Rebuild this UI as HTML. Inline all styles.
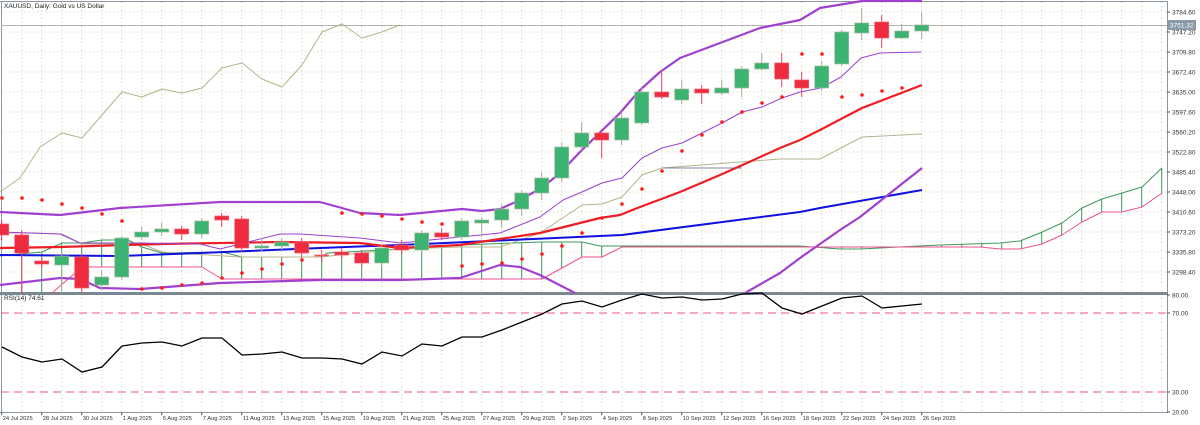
<!DOCTYPE html>
<html><head><meta charset="utf-8"><style>
html,body{margin:0;padding:0;background:#fff;width:1200px;height:425px;overflow:hidden}
svg{display:block;font-family:"Liberation Sans",sans-serif}
</style></head><body>
<svg id="s" width="1200" height="425" viewBox="0 0 1200 425" xmlns="http://www.w3.org/2000/svg">
<rect width="1200" height="425" fill="#fff"/>
<g id="grid"></g>
<g id="main" fill="none"></g>
<g id="cand"></g>
<g id="sar" fill="#ff1a1a"></g>
<g id="ax" font-size="6.5" fill="#333"></g>
<text x="4" y="8" font-size="6.5" fill="#222">XAUUSD, Daily:  Gold vs US Dollar</text>
<text x="4" y="300" font-size="6.5" fill="#222">RSI(14) 74.61</text>
</svg>
<script>
const NS="http://www.w3.org/2000/svg";
function el(p,t,a,txt){const e=document.createElementNS(NS,t);for(const k in a)e.setAttribute(k,a[k]);if(txt!==undefined)e.textContent=txt;document.getElementById(p).appendChild(e);return e;}
function pl(pts,c,w,extra){const a={points:pts.map(p=>p.join(',')).join(' '),stroke:c,'stroke-width':w,fill:'none','stroke-linejoin':'round'};Object.assign(a,extra||{});el('main','polyline',a);}
for(let x=1.7;x<1167;x+=20){el('grid','line',{x1:x,y1:2,x2:x,y2:412,stroke:'#c8c8b4','stroke-width':1,'stroke-dasharray':'1,3'});}
const prices=[[12,'3784.60'],[32,'3747.20'],[52,'3709.80'],[72,'3672.40'],[92,'3635.00'],[112,'3597.60'],[132,'3560.20'],[152,'3522.80'],[172,'3485.40'],[192,'3448.00'],[212,'3410.60'],[232,'3373.20'],[252,'3335.80'],[272,'3298.40']];
prices.forEach(p=>{el('grid','line',{x1:1,y1:p[0],x2:1167,y2:p[0],stroke:'#d6d6a8','stroke-width':1,'stroke-dasharray':'1,3'});el('ax','text',{x:1172,y:p[0]+2.5},p[1]);el('ax','line',{x1:1167,y1:p[0],x2:1170,y2:p[0],stroke:'#555'});});
[[295,'80.00'],[313,'70.00'],[392,'30.00'],[412,'20.00']].forEach(p=>{el('ax','text',{x:1172,y:p[0]+2.5},p[1]);el('ax','line',{x1:1167,y1:p[0],x2:1170,y2:p[0],stroke:'#555'});});
el('grid','line',{x1:0,y1:1.5,x2:1168,y2:1.5,stroke:'#8c98a4','stroke-width':1});
el('grid','line',{x1:1.5,y1:1,x2:1.5,y2:412,stroke:'#8c98a4','stroke-width':1});
el('grid','line',{x1:1167.5,y1:1,x2:1167.5,y2:413,stroke:'#8c98a4','stroke-width':1});
el('grid','line',{x1:0,y1:293.5,x2:1168,y2:293.5,stroke:'#7a8894','stroke-width':3});
el('grid','line',{x1:0,y1:412.5,x2:1168,y2:412.5,stroke:'#8c98a4','stroke-width':1});
el('grid','line',{x1:1,y1:25.5,x2:1167,y2:25.5,stroke:'#b4b4b4','stroke-width':1});
el('grid','line',{x1:1,y1:313,x2:1167,y2:313,stroke:'#f0508c','stroke-width':1,'stroke-dasharray':'8,5'});
el('grid','line',{x1:1,y1:392,x2:1167,y2:392,stroke:'#f0508c','stroke-width':1,'stroke-dasharray':'8,5'});
el('ax','rect',{x:1168,y:20,width:28,height:10,fill:'#8a9aa8'});
el('ax','text',{x:1170,y:27.5,fill:'#fff'},'3751.32');
const d=['24 Jul 2025','28 Jul 2025','30 Jul 2025','1 Aug 2025','5 Aug 2025','7 Aug 2025','11 Aug 2025','13 Aug 2025','15 Aug 2025','19 Aug 2025','21 Aug 2025','25 Aug 2025','27 Aug 2025','29 Aug 2025','2 Sep 2025','4 Sep 2025','8 Sep 2025','10 Sep 2025','12 Sep 2025','16 Sep 2025','18 Sep 2025','22 Sep 2025','24 Sep 2025','26 Sep 2025'];
d.forEach((t,i)=>{const x=1.7+40*i;el('ax','line',{x1:x,y1:412,x2:x,y2:415,stroke:'#555'});el('ax','text',{x:x+1,y:420,'font-size':'5.8'},t);});
const gA=[[0,256],[42,252],[62,243],[82,243],[102,240],[128,240],[142,247],[162,253],[222,252],[242,257],[320,257],[328,253],[400,249],[460,245],[540,242],[582,242],[600,246],[660,246],[800,246],[840,249],[860,249],[940,245],[1000,243],[1020,241],[1040,233],[1062,223],[1082,208],[1102,199],[1122,193],[1142,187],[1162,168]];
const pB=[[52,293],[82,267],[202,267],[222,279],[400,279],[542,279],[582,257],[602,257],[622,247],[980,247],[1000,249],[1020,249],[1042,244],[1062,235],[1082,222],[1102,212],[1122,212],[1142,207],[1162,193]];
function interp(arr,x){for(let i=0;i<arr.length-1;i++){if(x>=arr[i][0]&&x<=arr[i+1][0]){const t=(x-arr[i][0])/(arr[i+1][0]-arr[i][0]);return arr[i][1]+t*(arr[i+1][1]-arr[i][1]);}}return null;}
for(let x=21.7;x<1165;x+=20){const a=interp(gA,x);let b=interp(pB,x);if(b===null&&x<52)b=293;if(a!==null&&b!==null&&Math.abs(a-b)>1)el('main','line',{x1:x,y1:a,x2:x,y2:b,stroke:'#3c9a5a','stroke-width':1});}
pl(gA,'#3c9a5a',1);pl(pB,'#f0508c',1);
// tenkan/kijun
pl([[0,233],[28,233],[62,234],[82,244],[142,244],[162,252],[240,257],[320,257],[400,249],[460,247],[500,247],[540,233],[582,205],[602,204],[622,197],[642,175],[662,168],[780,159],[820,159],[862,137],[922,134]],'#b4b48c',1);
pl([[662,168],[742,168]],'#7a8a9a',1);
pl([[0,192],[20,178],[40,147],[62,133],[82,138],[102,115],[122,92],[142,97],[162,89],[182,93],[202,88],[222,68],[242,63],[262,79],[282,87],[302,65],[322,32],[342,24],[362,38],[382,32],[400,25]],'#b4b48c',1);
// blue MA
pl([[0,255],[120,256],[200,253],[320,248],[400,245],[622,235],[800,212],[820,208],[922,190]],'#1010e0',2);
// EMA red
pl([[0,248],[60,247],[160,244],[280,242],[360,243],[400,248],[460,245],[540,233],[600,218],[620,215],[640,207],[680,192],[720,175],[747,163],[780,148],[800,140],[820,130],[862,108],[922,85]],'#ee1c24',2.2);
// bollinger
pl([[0,212],[60,215],[120,208],[220,202],[320,202],[360,213],[400,215],[462,209],[482,211],[500,209],[520,200],[543,187],[560,173],[580,152],[620,113],[640,90],[660,72],[680,58],[720,43],[760,28],[800,20],[820,8],[862,1],[922,1]],'#a040d0',2.2);
pl([[0,285],[60,278],[80,279],[100,288],[140,289],[220,283],[320,280],[400,280],[460,278],[500,265],[520,267],[540,275],[575,293]],'#a040d0',2.2);
pl([[745,293],[780,273],[800,258],[840,230],[860,217],[922,168]],'#a040d0',2.2);
pl([[0,232],[60,234],[80,243],[140,243],[200,244],[220,249],[280,234],[300,234],[360,238],[400,243],[500,233],[540,217],[563,200],[582,192],[602,183],[622,178],[642,158],[662,148],[682,143],[702,133],[722,123],[742,112],[762,107],[782,98],[800,92],[821,88],[841,77],[861,58],[880,53],[921,52]],'#9a40d0',1);
const C=[['r',224,235,220,240],['r',235,253,230,293],['r',261,264,258,268],['g',256,265,250,293],['r',257,288,254,293],['g',277,285,270,290],['g',238,277,236,280],['g',232,237,227,240],['g',229,232,222,236],['r',229,234,226,240],['g',221,234,218,238],['r',216,220,213,227],['r',219,248,216,252],['g',246,248,238,252],['g',242,246,238,250],['r',242,253,238,257],['r',255,256,250,262],['r',252,255,248,258],['r',253,263,250,266],['g',248,263,244,268],['r',245,250,240,254],['g',233,250,230,253],['r',233,237,228,240],['g',221,237,218,240],['g',220,223,217,237],['g',209,220,204,228],['g',193,209,190,216],['g',178,193,172,200],['g',147,178,143,182],['g',133,147,122,150],['r',133,140,129,158],['g',118,140,111,145],['g',92,123,86,125],['r',92,97,70,99],['g',89,100,80,104],['r',89,93,85,104],['g',88,93,80,95],['g',69,88,66,97],['g',63,69,53,70],['r',63,79,53,87],['r',80,88,72,97],['g',66,88,61,90],['g',32,64,30,66],['g',23,33,8,40],['r',22,38,15,48],['g',31,38,24,39],['g',25,31,12,39]];
C.forEach((c,k)=>{const x=1.7+20*k;const col=c[0]=='g'?'#3cb371':'#ef2b3f';const br=c[0]=='g'?'#a9b9a0':'#f06070';
el('cand','line',{x1:x,y1:c[3],x2:x,y2:c[4],stroke:c[0]=='g'?'#a0ac98':'#f04060','stroke-width':1});
el('cand','rect',{x:x-7,y:c[1],width:14,height:Math.max(1,c[2]-c[1]),fill:col,stroke:br,'stroke-width':0.7});});
[[2,198],[22,198],[42,200],[62,204],[82,208],[102,214],[122,221],[142,289],[162,288],[182,285],[202,283],[222,278],[242,273],[262,269],[282,264],[302,260],[342,213],[362,214],[382,216],[402,219],[422,222],[442,224],[462,266],[482,264],[502,263],[522,259],[542,254],[562,246],[582,233],[602,218],[622,204],[642,189],[662,171],[682,151],[702,135],[722,122],[742,112],[762,103],[782,97],[802,54],[822,54],[842,97],[862,95],[882,91],[902,88]].forEach(p=>el('sar','circle',{cx:p[0],cy:p[1],r:1.8}));
el('main','polyline',{points:[[2,347],[22,357],[42,362],[62,359],[82,372],[102,367],[122,346],[142,343],[162,342],[182,346],[202,338],[222,338],[242,355],[262,354],[282,352],[302,358],[322,358],[342,359],[362,364],[382,352],[402,356],[422,344],[442,346],[462,337],[482,337],[502,330],[522,322],[542,314],[562,304],[582,301],[602,307],[622,300],[642,294],[662,298],[682,297],[702,300],[722,299],[742,294],[762,293],[782,308],[802,314],[822,306],[842,298],[862,296],[882,308],[902,306],[922,304]].map(p=>p.join(',')).join(' '),stroke:'#000','stroke-width':1.3,fill:'none'});
</script>
</body></html>
